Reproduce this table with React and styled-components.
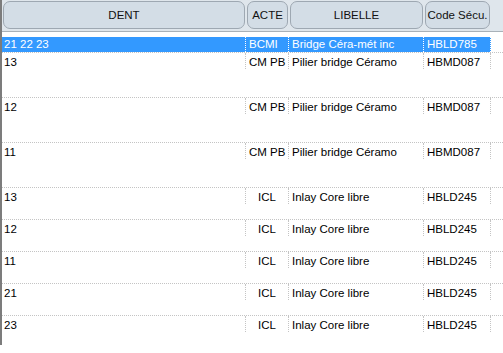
import React from "react";
import styled, { createGlobalStyle } from "styled-components";

const GlobalStyle = createGlobalStyle`
  html, body {
    margin: 0;
    padding: 0;
    background: #ffffff;
  }
  body {
    font-family: "Liberation Sans", Arial, sans-serif;
    font-size: 11.5px;
    color: #000;
  }
`;

const COLS = "244px 43px 135px 67px";

const Grid = styled.div`
  width: 503px;
  height: 345px;
  border-left: 2px solid #7c7c7c;
  box-sizing: border-box;
  background: #fff;
`;

const Header = styled.div`
  display: grid;
  grid-template-columns: ${COLS};
  height: 32px;
  box-sizing: border-box;
  background: #dfe6ec;
  border-bottom: 1px solid #a9b1b8;
  padding-top: 1px;
`;

const HeadCell = styled.div`
  display: flex;
  align-items: center;
  justify-content: center;
  margin: 0 1px 2px 1px;
  background: #d3dde6;
  border: 1px solid #9ea8b2;
  border-radius: 7px;
  color: #111;
  white-space: nowrap;
  overflow: hidden;
`;

const Body = styled.div`
  padding-top: 4px;
`;

const Row = styled.div`
  display: grid;
  grid-template-columns: ${COLS};
  height: ${({ $h }) => $h}px;
  border-top: 1px dotted ${({ $first }) => ($first ? "transparent" : "#c4c4c4")};
  box-sizing: border-box;
  align-items: start;
`;

const Cell = styled.div`
  height: ${({ $sel }) => ($sel ? 15 : 16)}px;
  line-height: ${({ $sel }) => ($sel ? 15 : 18)}px;
  padding-left: ${({ $pad }) => $pad ?? 2}px;
  text-align: ${({ $center }) => ($center ? "center" : "left")};
  white-space: nowrap;
  overflow: hidden;
  box-sizing: border-box;
  border-right: 1px dotted ${({ $sel }) => ($sel ? "#ffffff" : "#c4c4c4")};
  background: ${({ $sel }) => ($sel ? "#3399ff" : "transparent")};
  color: ${({ $sel }) => ($sel ? "#ffffff" : "#000")};
`;

const rows = [
  { dent: "21 22 23", acte: "BCMI", lib: "Bridge Céra-mét inc", code: "HBLD785", h: 16, sel: true },
  { dent: "13", acte: "CM PB", lib: "Pilier bridge Céramo", code: "HBMD087", h: 45 },
  { dent: "12", acte: "CM PB", lib: "Pilier bridge Céramo", code: "HBMD087", h: 45 },
  { dent: "11", acte: "CM PB", lib: "Pilier bridge Céramo", code: "HBMD087", h: 45 },
  { dent: "13", acte: "ICL", lib: "Inlay Core libre", code: "HBLD245", h: 32, center: true },
  { dent: "12", acte: "ICL", lib: "Inlay Core libre", code: "HBLD245", h: 32, center: true },
  { dent: "11", acte: "ICL", lib: "Inlay Core libre", code: "HBLD245", h: 32, center: true },
  { dent: "21", acte: "ICL", lib: "Inlay Core libre", code: "HBLD245", h: 32, center: true },
  { dent: "23", acte: "ICL", lib: "Inlay Core libre", code: "HBLD245", h: 26, center: true },
];

export default function App() {
  return (
    <>
      <GlobalStyle />
      <Grid>
        <Header>
          <HeadCell>DENT</HeadCell>
          <HeadCell>ACTE</HeadCell>
          <HeadCell>LIBELLE</HeadCell>
          <HeadCell>Code Sécu.</HeadCell>
        </Header>
        <Body>
          {rows.map((r, i) => (
            <Row key={i} $h={r.h} $first={i === 0}>
              <Cell $sel={r.sel}>{r.dent}</Cell>
              <Cell $sel={r.sel} $center={r.center} $pad={r.center ? 0 : 3}>
                {r.acte}
              </Cell>
              <Cell $sel={r.sel} $pad={3}>{r.lib}</Cell>
              <Cell $sel={r.sel} $pad={3}>{r.code}</Cell>
            </Row>
          ))}
        </Body>
      </Grid>
    </>
  );
}
